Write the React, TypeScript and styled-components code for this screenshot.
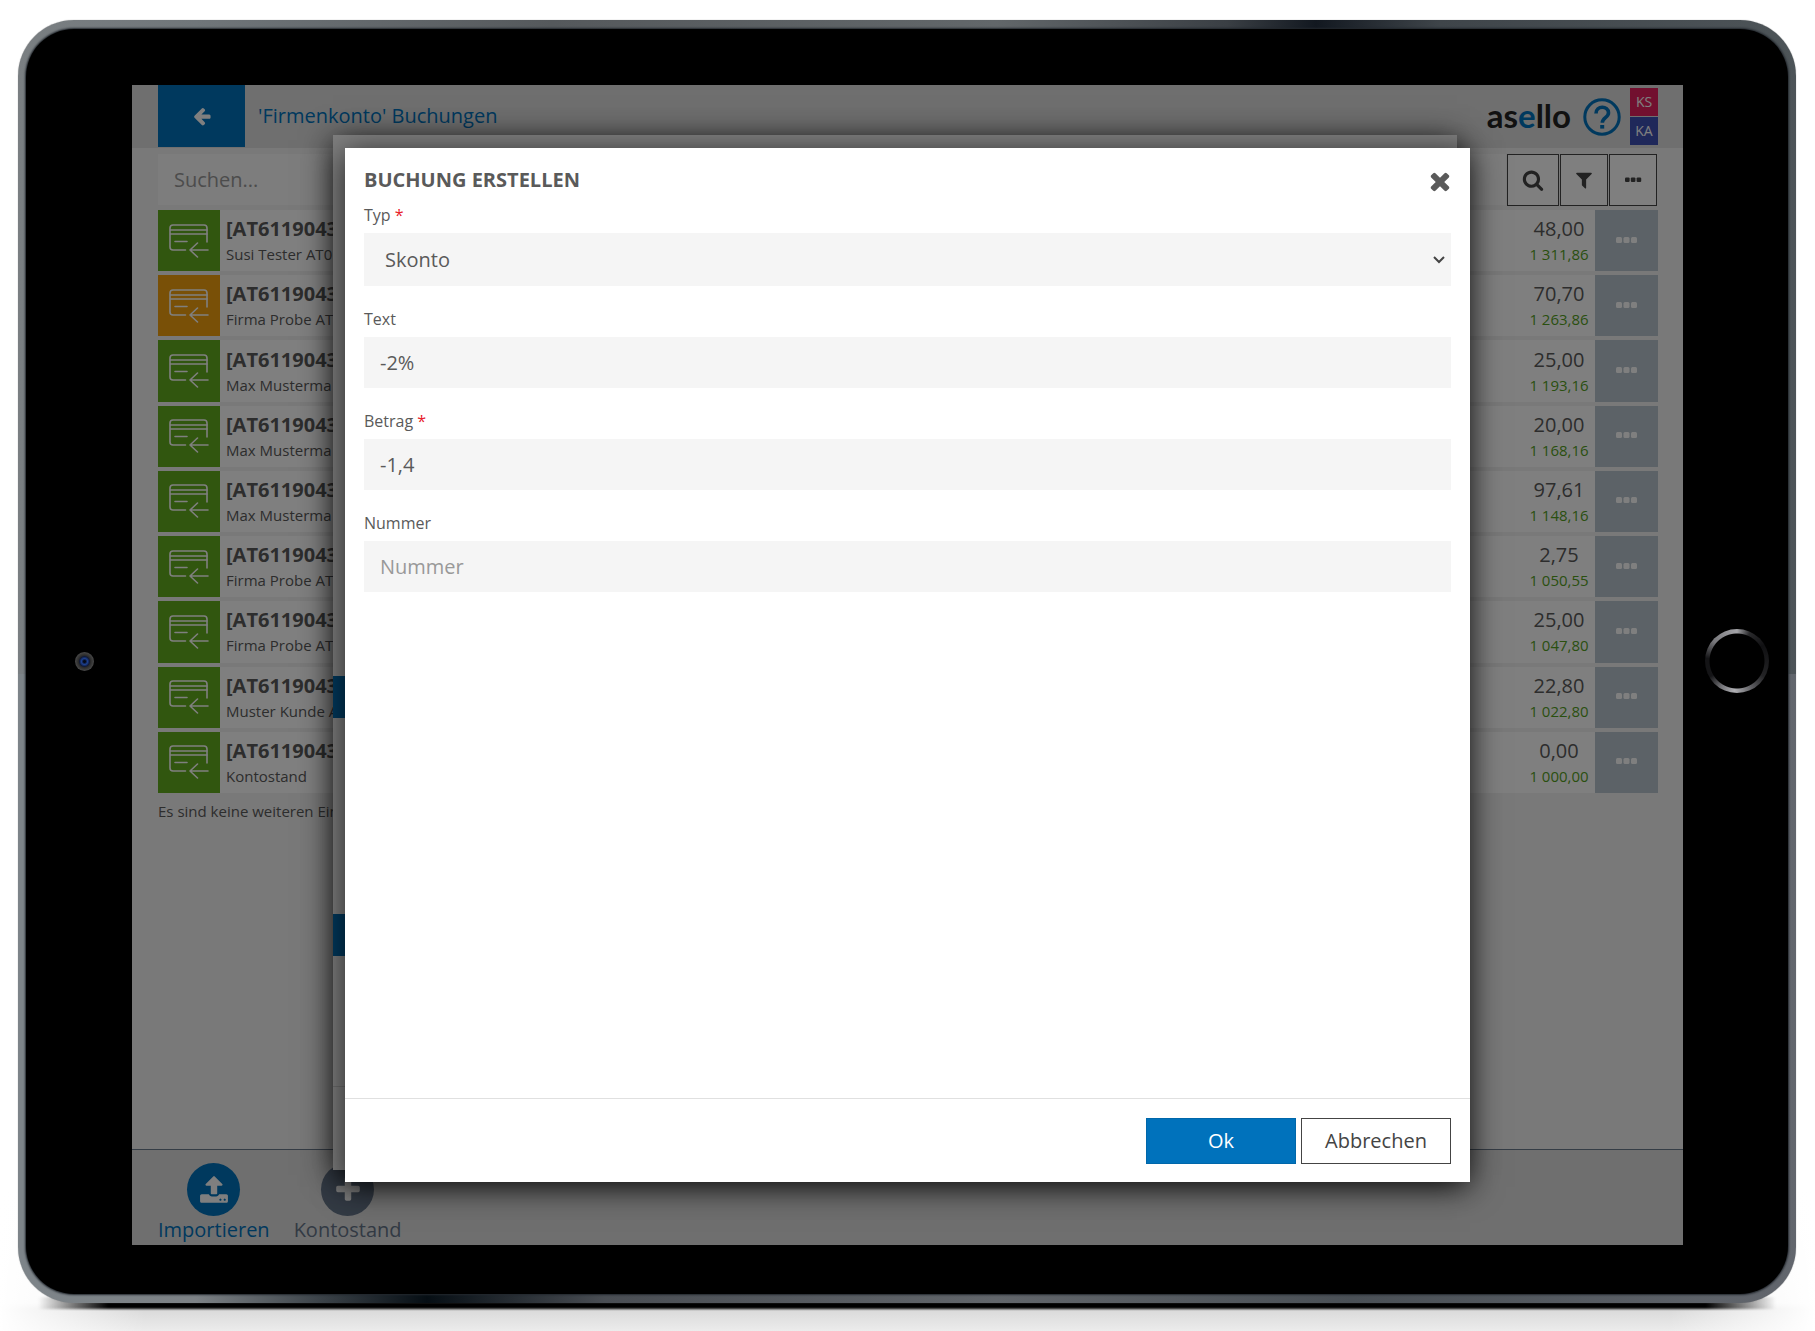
import React from "react";
import styled, { createGlobalStyle } from "styled-components";

const GlobalStyle = createGlobalStyle`
  *, *::before, *::after { box-sizing: border-box; }
  body {
    margin: 0;
    background: #fff;
    color: #5a5a5a;
    font: 400 20px/26px "Open Sans", "Noto Sans", sans-serif;
  }
  button, input, select { font: inherit; color: inherit; margin: 0; border-radius: 0; }
  button { cursor: pointer; padding: 0; }
`;

const blue = "#0072bc";

const Stage = styled.div`
  position: relative;
  z-index: 0;
  min-height: 100vh;
  display: flex;
  padding: 20px 19px 28px 18px;
  overflow: hidden;
  background:
    linear-gradient(to right, #fff 0, transparent 8%, transparent 92%, #fff 100%),
    linear-gradient(to bottom, #fff calc(100% - 140px), #f2f2f2 calc(100% - 28px), #d9d9d9 calc(100% - 22px), #ececec 100%);
`;

const Tablet = styled.div`
  position: relative;
  flex: 1;
  display: flex;
  padding: 9px 8px;
  border-radius: 56px;
  background:
    linear-gradient(to right, #7a7f82 0%, #70767a 10%, #55595c 30%, #62676a 55%, #3a3f44 68%, #121820 73%, #3f454a 80%, #4d5458 100%) top / 100% 51% no-repeat,
    linear-gradient(to right, #7d8489 0%, #7d8286 10%, #3c4349 17%, #060e14 23%, #4a4e54 33%, #62666b 55%, #4a5056 75%, #62666d 100%) bottom / 100% 51% no-repeat;
  box-shadow: 0 0 1px #888;

  &::after {
    content: "";
    position: absolute;
    z-index: -1;
    inset: auto 20px -6px;
    height: 12px;
    background: linear-gradient(to right, transparent 0, #000 70px, #000 calc(100% - 70px), transparent 100%);
    filter: blur(1px);
  }
`;

const Glass = styled.div`
  flex: 1;
  display: grid;
  grid-template-columns: 106px minmax(0, 1fr) 105px;
  align-items: center;
  justify-items: center;
  padding: 56px 0 49px;
  border-radius: 48px;
  background: #000;
  box-shadow: 0 0 2px 1px #23282e;
`;

const Camera = styled.span`
  width: 19px;
  height: 19px;
  margin: 0 0 8px 10px;
  border-radius: 50%;
  background: radial-gradient(circle, #050a18 0 1px, #1c3f8f 3px, #101a38 5px, #2a2a2a 6px, #444 9px);
`;

const HomeButton = styled.button`
  width: 64px;
  height: 64px;
  margin: 0 0 8px 2px;
  border: 0;
  border-radius: 50%;
  background:
    radial-gradient(circle, #000 0 27px, transparent 28px),
    conic-gradient(#a4a4a8 0deg, #2a2a2c 24deg, #101012 60deg, #232325 120deg, #5c5c60 150deg, #b0b0b4 185deg, #77777b 210deg, #141416 240deg, #141416 275deg, #77777b 310deg, #a4a4a8 360deg);
`;

const Screen = styled.div`
  position: relative;
  align-self: stretch;
  justify-self: stretch;
  display: flex;
  flex-direction: column;
  overflow: hidden;
  background: #f2f2f2;
`;

const Header = styled.header`
  display: flex;
  align-items: center;
  height: 63px;
  padding: 0 25px 0 26px;
  background: #dedede;
`;

const BackButton = styled.button`
  align-self: flex-start;
  display: grid;
  place-items: center;
  width: 87px;
  height: 62px;
  border: 0;
  background: ${blue};
  color: #fff;
`;

const PageTitle = styled.h1`
  flex: 1;
  margin: 0;
  padding: 0 0 2px 13px;
  font: inherit;
  color: ${blue};
`;

const Logo = styled.span`
  padding-bottom: 4px;
  font: 700 33px/40px Lato, sans-serif;
  color: #222;
  em { font-style: normal; color: ${blue}; }
`;

const HelpButton = styled.button`
  display: grid;
  width: 38px;
  height: 38px;
  margin: 0 9px 0 12px;
  border: 0;
  background: none;
  color: ${blue};
`;

const Badges = styled.div`
  display: grid;
  gap: 1px;
`;

const Badge = styled.span<{ $color: string }>`
  width: 28px;
  height: 28px;
  font-size: 14px;
  line-height: 28px;
  text-align: center;
  color: #fff;
  background: ${(p) => p.$color};
`;

const Content = styled.main`
  flex: 1;
  padding: 6px 25px 0 26px;
`;

const Toolbar = styled.div`
  display: flex;
  gap: 1px;
  height: 52px;
  margin-bottom: 4px;
  padding-right: 1px;
`;

const SearchBox = styled.input`
  flex: 1;
  height: 51px;
  padding: 0 16px;
  border: 0;
  background: #fafafa;
  &::placeholder { color: #999; opacity: 1; }
`;

const ToolButton = styled.button<{ $width: number }>`
  display: grid;
  place-items: center;
  width: ${(p) => p.$width}px;
  border: 1px solid #444;
  background: #fff;
  color: #444;
`;

const Bookings = styled.ul`
  display: grid;
  grid-auto-rows: 1fr;
  gap: 4px;
  min-height: 583px;
  margin: 0;
  padding: 0;
  list-style: none;
`;

const Booking = styled.li`
  display: grid;
  grid-template-columns: 62px minmax(0, 1fr) 72px 63px;
  background: #fff;
`;

const TypeTile = styled.span<{ $color: string }>`
  display: grid;
  place-items: center;
  background: ${(p) => p.$color};
  color: #fff;
`;

const BookingText = styled.div`
  display: grid;
  align-content: center;
  padding: 1px 0 0 6px;
  white-space: nowrap;
  strong { font-weight: 700; }
`;

const Amounts = styled.div`
  display: grid;
  align-content: center;
  padding-top: 1px;
  text-align: center;
`;

const Small = styled.span<{ $green?: boolean }>`
  font-size: 15px;
  line-height: 24px;
  color: ${(p) => (p.$green ? "#55a01e" : "#5a5a5a")};
`;

const RowMenu = styled.button`
  display: grid;
  place-items: center;
  border: 0;
  background: #b8c4ce;
  color: #fff;
`;

const EndNote = styled.p`
  margin: 6px 0 0;
  font-size: 15px;
  line-height: 24px;
`;

const BottomBar = styled.footer`
  display: flex;
  gap: 24px;
  height: 96px;
  padding: 13px 26px 0;
  border-top: 1px solid #6b7a8c;
  background: #dedede;
`;

const BottomAction = styled.button<{ $color: string }>`
  display: flex;
  flex-direction: column;
  align-items: center;
  gap: 1px;
  border: 0;
  background: none;
  color: ${(p) => p.$color};
`;

const Disc = styled.span<{ $color: string }>`
  display: grid;
  place-items: center;
  width: 53px;
  height: 53px;
  border-radius: 50%;
  background: ${(p) => p.$color};
  color: #fff;
`;

const BackDialog = styled.div`
  position: absolute;
  inset: 50px 226px 75px 201px;
  display: flex;
  flex-direction: column;
  background: #fff;
  box-shadow: 0 5px 30px rgba(0, 0, 0, 0.75);
`;

const Spacer = styled.div<{ $height: number }>`
  height: ${(p) => p.$height}px;
`;

const BlueBand = styled.div`
  height: 42px;
  background: ${blue};
`;

const BackDialogFooter = styled.div`
  height: 84px;
  margin-top: auto;
  border-top: 1px solid #ddd;
`;

const Backdrop = styled.div`
  position: absolute;
  inset: 0;
  background: rgba(0, 0, 0, 0.5);
`;

const Dialog = styled.form`
  position: absolute;
  inset: 63px 213px;
  display: flex;
  flex-direction: column;
  background: #fff;
  box-shadow: 0 5px 30px rgba(0, 0, 0, 0.75);
`;

const DialogHead = styled.div`
  display: flex;
  align-items: flex-start;
  justify-content: space-between;
  padding: 19px 20px 10px 19px;
`;

const DialogTitle = styled.h2`
  margin: 0;
  font-size: 20px;
  line-height: 26px;
  font-weight: 700;
`;

const CloseButton = styled.button`
  display: grid;
  place-items: center;
  width: 24px;
  height: 24px;
  border: 0;
  background: none;
`;

const Fields = styled.div`
  flex: 1;
  display: flex;
  flex-direction: column;
  gap: 21px;
  padding: 0 19px;
`;

const Field = styled.div`
  display: flex;
  flex-direction: column;
`;

const Label = styled.label`
  height: 30px;
  font-size: 16px;
  line-height: 24px;
  span { color: #e8202a; }
`;

const TextBox = styled.input`
  height: 51px;
  padding: 0 16px;
  border: 0;
  background: #f5f5f5;
  &::placeholder { color: #999; opacity: 1; }
`;

const SelectWrap = styled.div`
  position: relative;
  display: grid;
  svg { position: absolute; right: 6px; top: 21px; pointer-events: none; }
`;

const Select = styled.select`
  appearance: none;
  height: 53px;
  padding: 0 21px;
  border: 0;
  background: #f5f5f5;
`;

const DialogFoot = styled.div`
  display: flex;
  justify-content: flex-end;
  gap: 5px;
  height: 84px;
  padding: 19px;
  border-top: 1px solid #e0e0e0;
`;

const DialogButton = styled.button<{ $primary?: boolean }>`
  width: 150px;
  height: 46px;
  border: 1px solid ${(p) => (p.$primary ? "#0067aa" : "#444")};
  background: ${(p) => (p.$primary ? blue : "#fff")};
  color: ${(p) => (p.$primary ? "#fff" : "#444")};
`;

const glyphs = {
  arrowLeft:
    "M1664 896v128q0 53-32.5 90.5t-84.5 37.5h-704l293 294q38 36 38 90t-38 90l-75 76q-37 37-90 37-52 0-91-37l-651-652q-37-37-37-90 0-52 37-91l651-650q38-38 91-38 52 0 90 38l75 74q38 38 38 91t-38 91l-293 293h704q52 0 84.5 37.5t32.5 90.5z",
  search:
    "M1216 832q0-185-131.5-316.5t-316.5-131.5-316.5 131.5-131.5 316.5 131.5 316.5 316.5 131.5 316.5-131.5 131.5-316.5zm512 832q0 52-38 90t-90 38q-54 0-90-38l-343-342q-179 124-399 124-143 0-273.5-55.5t-225-150-150-225-55.5-273.5 55.5-273.5 150-225 225-150 273.5-55.5 273.5 55.5 225 150 150 225 55.5 273.5q0 220-124 399l343 343q37 37 37 90z",
  filter:
    "M1595 295q17 41-14 70l-493 493v742q0 42-39 59-13 5-25 5-27 0-45-19l-256-256q-19-19-19-45v-486l-493-493q-31-29-14-70 17-39 59-39h1280q42 0 59 39z",
  upload:
    "M1344 1472q0-26-19-45t-45-19-45 19-19 45 19 45 45 19 45-19 19-45zm256 0q0-26-19-45t-45-19-45 19-19 45 19 45 45 19 45-19 19-45zm128-224v320q0 40-28 68t-68 28h-1472q-40 0-68-28t-28-68v-320q0-40 28-68t68-28h427q21 56 70.5 92t110.5 36h256q61 0 110.5-36t70.5-92h427q40 0 68 28t28 68zm-325-648q-17 40-59 40h-256v448q0 26-19 45t-45 19h-256q-26 0-45-19t-19-45v-448h-256q-42 0-59-40-17-39 14-69l448-448q18-19 45-19t45 19l448 448q31 30 14 69z",
  plus:
    "M1600 736v192q0 40-28 68t-68 28h-416v416q0 40-28 68t-68 28h-192q-40 0-68-28t-28-68v-416h-416q-40 0-68-28t-28-68v-192q0-40 28-68t68-28h416v-416q0-40 28-68t68-28h192q40 0 68 28t28 68v416h416q40 0 68 28t28 68z",
  times:
    "M1490 1322q0 40-28 68l-136 136q-28 28-68 28t-68-28l-294-294-294 294q-28 28-68 28t-68-28l-136-136q-28-28-28-68t28-68l294-294-294-294q-28-28-28-68t28-68l136-136q28-28 68-28t68 28l294 294 294-294q28-28 68-28t68 28l136 136q28 28 28 68t-28 68l-294 294 294 294q28 28 28 68z",
};

function Glyph({ name, size }: { name: keyof typeof glyphs; size: number }) {
  return (
    <svg width={size} height={size} viewBox="0 0 1792 1792" fill="currentColor" aria-hidden="true">
      <path d={glyphs[name]} />
    </svg>
  );
}

function Dots({ width }: { width: number }) {
  return (
    <svg width={width} height={width} viewBox="0 0 22 22" fill="currentColor" aria-hidden="true">
      <rect x="0" y="7" width="6" height="6" rx="1.5" />
      <rect x="7.5" y="7" width="6" height="6" rx="1.5" />
      <rect x="15" y="7" width="6" height="6" rx="1.5" />
    </svg>
  );
}

function CardIcon() {
  return (
    <svg width="40" height="34" viewBox="0 0 40 34" fill="none" stroke="currentColor" strokeWidth="1.6" strokeLinecap="round" strokeLinejoin="round" aria-hidden="true">
      <path d="M16.500 26H4a3 3 0 0 1-3-3V4a3 3 0 0 1 3-3h31a3 3 0 0 1 3 3V18" />
      <path d="M1.500 6h36.500M1.500 10h36.500M6 17.500h12M39 26H21M28.500 19l-7.500 7 7.500 7" />
    </svg>
  );
}

function HelpIcon() {
  return (
    <svg width="38" height="38" viewBox="0 0 38 38" fill="none" stroke="currentColor" aria-hidden="true">
      <circle cx="19" cy="19" r="17.200" strokeWidth="3" />
      <path d="M13 15.500c0-8.500 12.500-8 12.500-.8 0 5-6.200 4.800-6.200 10" strokeWidth="3.600" />
      <path d="M17.200 27h4v3.600h-4z" fill="currentColor" stroke="none" />
    </svg>
  );
}

const green = "#62ac1e";
const orange = "#f2a00e";

const bookings = [
  { color: green, text: "Susi Tester AT0", amount: "48,00", balance: "1 311,86" },
  { color: orange, text: "Firma Probe AT", amount: "70,70", balance: "1 263,86" },
  { color: green, text: "Max Musterma", amount: "25,00", balance: "1 193,16" },
  { color: green, text: "Max Musterma", amount: "20,00", balance: "1 168,16" },
  { color: green, text: "Max Musterma", amount: "97,61", balance: "1 148,16" },
  { color: green, text: "Firma Probe AT", amount: "2,75", balance: "1 050,55" },
  { color: green, text: "Firma Probe AT", amount: "25,00", balance: "1 047,80" },
  { color: green, text: "Muster Kunde A", amount: "22,80", balance: "1 022,80" },
  { color: green, text: "Kontostand", amount: "0,00", balance: "1 000,00" },
];

export default function App() {
  return (
    <Stage>
      <GlobalStyle />
      <Tablet>
        <Glass>
          <Camera />
          <Screen>
            <Header>
              <BackButton aria-label="Zurück"><Glyph name="arrowLeft" size={20} /></BackButton>
              <PageTitle>'Firmenkonto' Buchungen</PageTitle>
              <Logo>as<em>e</em>llo</Logo>
              <HelpButton aria-label="Hilfe"><HelpIcon /></HelpButton>
              <Badges>
                <Badge $color="#e5215f">KS</Badge>
                <Badge $color="#3f51b5">KA</Badge>
              </Badges>
            </Header>
            <Content>
              <Toolbar>
                <SearchBox aria-label="Suchen" placeholder="Suchen..." />
                <ToolButton $width={52} aria-label="Suchen"><Glyph name="search" size={22} /></ToolButton>
                <ToolButton $width={48} aria-label="Filter"><Glyph name="filter" size={20} /></ToolButton>
                <ToolButton $width={48} aria-label="Mehr"><Dots width={17} /></ToolButton>
              </Toolbar>
              <Bookings>
                {bookings.map((b, i) => (
                  <Booking key={i}>
                    <TypeTile $color={b.color}><CardIcon /></TypeTile>
                    <BookingText>
                      <strong>[AT6119043</strong>
                      <Small>{b.text}</Small>
                    </BookingText>
                    <Amounts>
                      <span>{b.amount}</span>
                      <Small $green>{b.balance}</Small>
                    </Amounts>
                    <RowMenu aria-label="Aktionen"><Dots width={22} /></RowMenu>
                  </Booking>
                ))}
              </Bookings>
              <EndNote>Es sind keine weiteren Ein</EndNote>
            </Content>
            <BottomBar>
              <BottomAction $color={blue}>
                <Disc $color={blue}><Glyph name="upload" size={30} /></Disc>
                Importieren
              </BottomAction>
              <BottomAction $color="#667589">
                <Disc $color="#667589"><Glyph name="plus" size={30} /></Disc>
                Kontostand
              </BottomAction>
            </BottomBar>
            <BackDialog>
              <Spacer $height={541} />
              <BlueBand />
              <Spacer $height={196} />
              <BlueBand />
              <BackDialogFooter />
            </BackDialog>
            <Backdrop />
            <Dialog role="dialog" aria-labelledby="dialog-title" onSubmit={(e) => e.preventDefault()}>
              <DialogHead>
                <DialogTitle id="dialog-title">BUCHUNG ERSTELLEN</DialogTitle>
                <CloseButton type="button" aria-label="Schließen"><Glyph name="times" size={28} /></CloseButton>
              </DialogHead>
              <Fields>
                <Field>
                  <Label htmlFor="typ">Typ <span>*</span></Label>
                  <SelectWrap>
                    <Select id="typ" defaultValue="Skonto">
                      <option>Skonto</option>
                    </Select>
                    <svg width="12" height="12" viewBox="0 0 12 12" fill="none" stroke="#444" strokeWidth="2" aria-hidden="true">
                      <path d="M1 3l5 5 5-5" />
                    </svg>
                  </SelectWrap>
                </Field>
                <Field>
                  <Label htmlFor="text">Text</Label>
                  <TextBox id="text" defaultValue="-2%" />
                </Field>
                <Field>
                  <Label htmlFor="betrag">Betrag <span>*</span></Label>
                  <TextBox id="betrag" defaultValue="-1,4" />
                </Field>
                <Field>
                  <Label htmlFor="nummer">Nummer</Label>
                  <TextBox id="nummer" placeholder="Nummer" />
                </Field>
              </Fields>
              <DialogFoot>
                <DialogButton $primary type="submit">Ok</DialogButton>
                <DialogButton type="button">Abbrechen</DialogButton>
              </DialogFoot>
            </Dialog>
          </Screen>
          <HomeButton aria-label="Home" />
        </Glass>
      </Tablet>
    </Stage>
  );
}
